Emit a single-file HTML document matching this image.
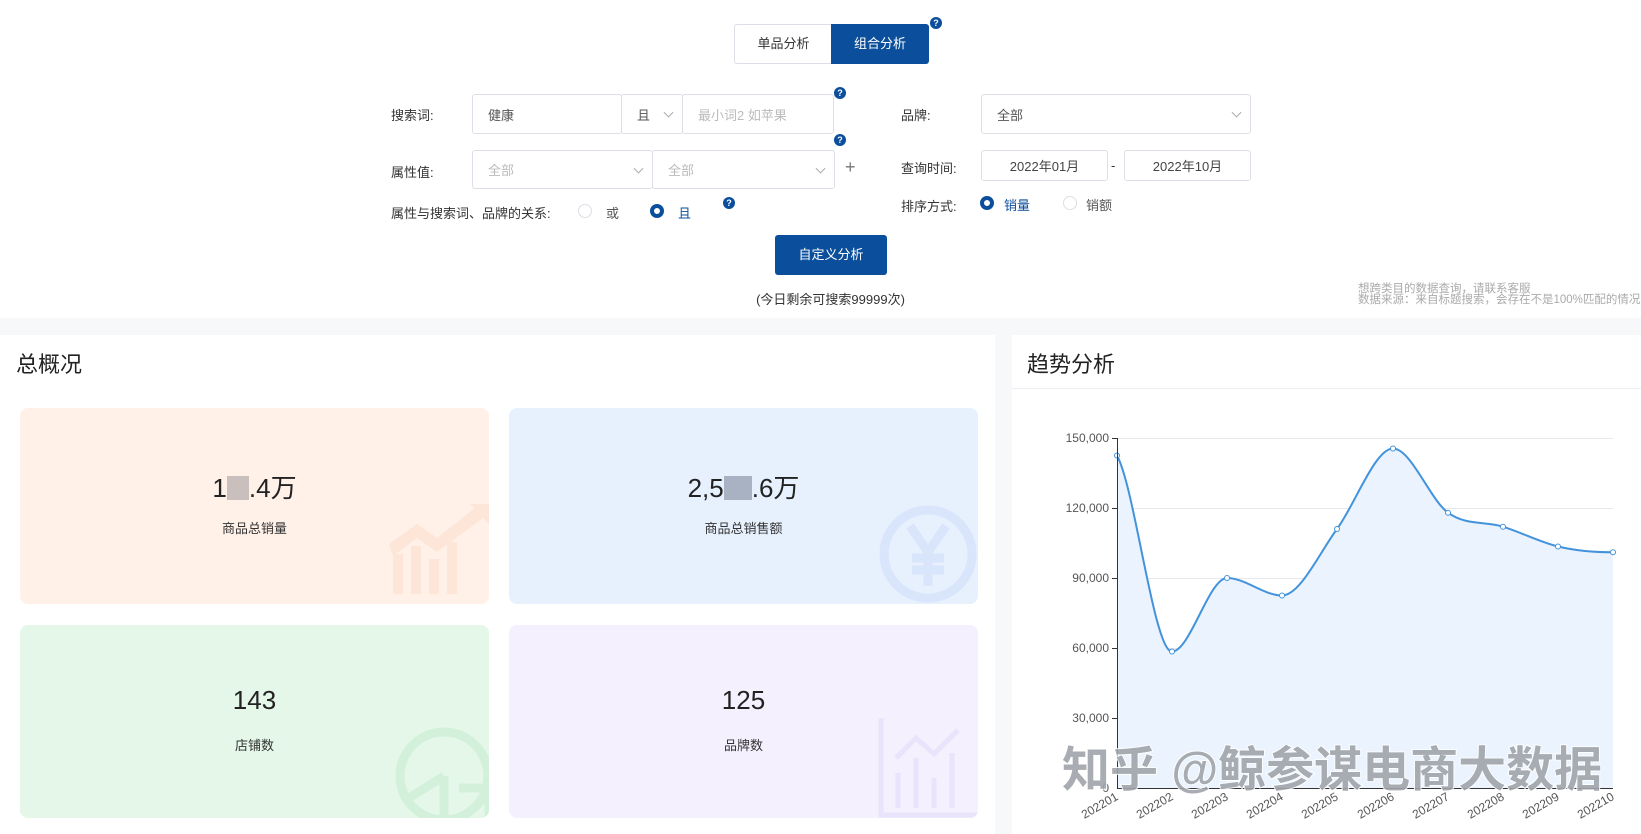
<!DOCTYPE html>
<html><head><meta charset="utf-8">
<style>
*{margin:0;padding:0;box-sizing:border-box}
body{width:1641px;height:834px;overflow:hidden;background:#fff;font-family:"Liberation Sans","Noto Sans CJK SC",sans-serif;color:#333;position:relative}
.a{position:absolute}
.lbl{font-size:13px;color:#333}
.inp{position:absolute;border:1px solid #dcdfe6;border-radius:3px;background:#fff;font-size:13px;color:#555;padding-left:15px;display:flex;align-items:center}
.ph{color:#bbb}
.chev{position:absolute;right:10px;top:50%;width:7px;height:7px;border-right:1px solid #aaa;border-bottom:1px solid #aaa;transform:translateY(-70%) rotate(45deg)}
.q{position:absolute;width:12px;height:12px;border-radius:50%;background:#0b4f9c;color:#fff;font-size:9px;font-weight:bold;text-align:center;line-height:12px}
.rad{position:absolute;width:14px;height:14px;border-radius:50%;border:1px solid #dcdfe6;background:#fff}
.rad.on{border:4px solid #0b4f9c}
.card{position:absolute;border-radius:8px;overflow:hidden}
.num{position:absolute;left:0;right:0;text-align:center;font-size:26px;color:#222;top:60px}
.cl{position:absolute;left:0;right:0;text-align:center;font-size:13px;color:#333;top:110px}
</style></head><body>
<div class="a" style="left:734px;top:24px;width:98px;height:40px;border:1px solid #dcdfe6;border-right:none;border-radius:3px 0 0 3px;font-size:13px;color:#333;text-align:center;line-height:38px">单品分析</div>
<div class="a" style="left:831px;top:24px;width:98px;height:40px;background:#0b4f9c;border-radius:0 3px 3px 0;font-size:13px;color:#fff;text-align:center;line-height:40px">组合分析</div>
<div class="q" style="left:930px;top:17px">?</div>

<div class="a lbl" style="left:391px;top:105px">搜索词:</div>
<div class="inp" style="left:472px;top:94px;width:150px;height:40px">健康</div>
<div class="inp" style="left:621px;top:94px;width:62px;height:40px;padding-left:15px">且<span class="chev"></span></div>
<div class="inp" style="left:682px;top:94px;width:152px;height:40px"><span class="ph">最小词2 如苹果</span></div>
<div class="q" style="left:834px;top:87px">?</div>

<div class="a lbl" style="left:901px;top:105px">品牌:</div>
<div class="inp" style="left:981px;top:94px;width:270px;height:40px">全部<span class="chev"></span></div>

<div class="a lbl" style="left:391px;top:162px">属性值:</div>
<div class="inp" style="left:472px;top:150px;width:181px;height:39px"><span class="ph">全部</span><span class="chev"></span></div>
<div class="inp" style="left:652px;top:150px;width:183px;height:39px"><span class="ph">全部</span><span class="chev"></span></div>
<div class="a" style="left:845px;top:157px;font-size:18px;color:#777">+</div>
<div class="q" style="left:834px;top:134px">?</div>

<div class="a lbl" style="left:901px;top:158px">查询时间:</div>
<div class="inp" style="left:981px;top:150px;width:127px;height:31px;justify-content:center;padding:0;color:#444">2022年01月</div>
<div class="a lbl" style="left:1111px;top:158px">-</div>
<div class="inp" style="left:1124px;top:150px;width:127px;height:31px;justify-content:center;padding:0;color:#444">2022年10月</div>

<div class="a lbl" style="left:391px;top:203px">属性与搜索词、品牌的关系:</div>
<div class="rad" style="left:578px;top:204px"></div>
<div class="a lbl" style="left:606px;top:203px;color:#555">或</div>
<div class="rad on" style="left:650px;top:204px"></div>
<div class="a lbl" style="left:678px;top:203px;color:#0b4f9c">且</div>
<div class="q" style="left:723px;top:197px">?</div>

<div class="a lbl" style="left:901px;top:196px">排序方式:</div>
<div class="rad on" style="left:980px;top:196px"></div>
<div class="a lbl" style="left:1004px;top:195px;color:#0b4f9c">销量</div>
<div class="rad" style="left:1063px;top:196px"></div>
<div class="a lbl" style="left:1086px;top:195px;color:#555">销额</div>

<div class="a" style="left:775px;top:235px;width:112px;height:40px;background:#0b4f9c;border-radius:3px;color:#fff;font-size:13px;text-align:center;line-height:40px">自定义分析</div>
<div class="a" style="left:0;width:1661px;top:289px;text-align:center;font-size:13px;color:#333">(今日剩余可搜索99999次)</div>

<div class="a" style="left:1358px;top:284px;font-size:11.5px;line-height:11px;color:#aaa;white-space:nowrap">想跨类目的数据查询，请联系客服<br>数据来源：来自标题搜索，会存在不是100%匹配的情况</div>

<div class="a" style="left:0;top:318px;width:1641px;height:516px;background:#f6f8fa"></div>
<div class="a" style="left:0;top:335px;width:995px;height:499px;background:#fff"></div>
<div class="a" style="left:1012px;top:335px;width:629px;height:499px;background:#fff"></div>

<div class="a" style="left:16px;top:347px;font-size:22px;color:#222">总概况</div>

<div class="card" style="left:20px;top:408px;width:469px;height:196px;background:#fff0e8">
<div class="num">1<span style="display:inline-block;width:22px;height:24px;background:#c9c0bd;vertical-align:-3px"></span>.4万</div><div class="cl">商品总销量</div>
<svg class="a" style="right:0;bottom:10px" width="100" height="90" viewBox="0 0 100 90"><g fill="#fde5d8"><rect x="4" y="50" width="10" height="40"/><rect x="22" y="42" width="10" height="48"/><rect x="40" y="55" width="10" height="35"/><rect x="58" y="38" width="10" height="52"/><path d="M0 40 L28 20 L48 34 L86 4 L80 0 L100 0 L100 20 L94 14 L48 48 L28 34 L4 52Z"/></g></svg>
</div>
<div class="card" style="left:509px;top:408px;width:469px;height:196px;background:#e7f0fd">
<svg class="a" style="right:0;bottom:0" width="110" height="110" viewBox="0 0 110 110"><circle cx="60" cy="60" r="44" fill="none" stroke="#d8e5fb" stroke-width="9"/><path d="M42 32 L60 58 L78 32 M60 58 V92 M44 64 H76 M44 76 H76" fill="none" stroke="#d8e5fb" stroke-width="9"/></svg>
<div class="num">2,5<span style="display:inline-block;width:28px;height:24px;background:#a9b2c2;vertical-align:-3px"></span>.6万</div><div class="cl">商品总销售额</div>
</div>
<div class="card" style="left:20px;top:625px;width:469px;height:193px;background:#e4f7e8">
<svg class="a" style="right:0;bottom:0" width="100" height="100" viewBox="0 0 100 100"><circle cx="55" cy="58" r="44" fill="none" stroke="#d3f0da" stroke-width="9"/><path d="M55 58 L20 80 M55 58 V100 M70 70 H100 V100" fill="none" stroke="#d3f0da" stroke-width="9"/></svg>
<div class="num">143</div><div class="cl">店铺数</div>
</div>
<div class="card" style="left:509px;top:625px;width:469px;height:193px;background:#f4f0fe">
<svg class="a" style="right:0;bottom:0" width="100" height="100" viewBox="0 0 100 100"><g fill="none" stroke="#e9e3fb" stroke-width="5"><path d="M3 0 V97 H100"/><path d="M20 90 V55 M38 90 V40 M56 90 V60 M74 90 V35"/><path d="M18 40 L38 20 L56 36 L80 12"/></g></svg>
<div class="num">125</div><div class="cl">品牌数</div>
</div>

<div class="a" style="left:1027px;top:347px;font-size:22px;color:#222">趋势分析</div>
<div class="a" style="left:1012px;top:388px;width:629px;height:1px;background:#eceef2"></div>

<svg class="a" style="left:0;top:0" width="1641" height="834">
<g stroke="#e6e8ec" stroke-width="1">
<line x1="1117" y1="438.5" x2="1613" y2="438.5"/><line x1="1117" y1="508.5" x2="1613" y2="508.5"/><line x1="1117" y1="578.5" x2="1613" y2="578.5"/><line x1="1117" y1="648.5" x2="1613" y2="648.5"/><line x1="1117" y1="718.5" x2="1613" y2="718.5"/></g>
<path d="M1117,455.5 C1135,488.2 1154,651.5 1172,651.5 C1190,651.5 1209,578 1227,578 C1245,578 1264,595.5 1282,595.5 C1300,595.5 1319,553.5 1337,529 C1355,504.5 1375,448.5 1393,448.5 C1411,448.5 1430,499.7 1448,512.7 C1466,525.7 1485,521.1 1503,526.7 C1521,532.3 1540,542.2 1558,546.5 C1576,550.8 1595,552.3 1613,552.3 L1613,788 L1117,788Z" fill="#eaf3fe"/>
<path d="M1117,455.5 C1135,488.2 1154,651.5 1172,651.5 C1190,651.5 1209,578 1227,578 C1245,578 1264,595.5 1282,595.5 C1300,595.5 1319,553.5 1337,529 C1355,504.5 1375,448.5 1393,448.5 C1411,448.5 1430,499.7 1448,512.7 C1466,525.7 1485,521.1 1503,526.7 C1521,532.3 1540,542.2 1558,546.5 C1576,550.8 1595,552.3 1613,552.3" fill="none" stroke="#4393db" stroke-width="2"/>
<g fill="#fff" stroke="#4393db" stroke-width="1"><circle cx="1117" cy="455.5" r="2.5"/><circle cx="1172" cy="651.5" r="2.5"/><circle cx="1227" cy="578" r="2.5"/><circle cx="1282" cy="595.5" r="2.5"/><circle cx="1337" cy="529" r="2.5"/><circle cx="1393" cy="448.5" r="2.5"/><circle cx="1448" cy="512.7" r="2.5"/><circle cx="1503" cy="526.7" r="2.5"/><circle cx="1558" cy="546.5" r="2.5"/><circle cx="1613" cy="552.3" r="2.5"/></g>
<g stroke="#333" stroke-width="1"><line x1="1117.5" y1="438" x2="1117.5" y2="788"/><line x1="1117" y1="788.5" x2="1613" y2="788.5"/>
<line x1="1112" y1="438.5" x2="1117" y2="438.5"/><line x1="1112" y1="508.5" x2="1117" y2="508.5"/><line x1="1112" y1="578.5" x2="1117" y2="578.5"/><line x1="1112" y1="648.5" x2="1117" y2="648.5"/><line x1="1112" y1="718.5" x2="1117" y2="718.5"/></g>
<g font-size="12" fill="#555" text-anchor="end" font-family="Liberation Sans,sans-serif"><text x="1109" y="442">150,000</text><text x="1109" y="512">120,000</text><text x="1109" y="582">90,000</text><text x="1109" y="652">60,000</text><text x="1109" y="722">30,000</text><text x="1109" y="792">0</text></g>
<g font-size="12" fill="#555" text-anchor="end" font-family="Liberation Sans,sans-serif">
<text transform="translate(1119,799) rotate(-30)">202201</text><text transform="translate(1174,799) rotate(-30)">202202</text><text transform="translate(1229,799) rotate(-30)">202203</text><text transform="translate(1284,799) rotate(-30)">202204</text><text transform="translate(1339,799) rotate(-30)">202205</text><text transform="translate(1395,799) rotate(-30)">202206</text><text transform="translate(1450,799) rotate(-30)">202207</text><text transform="translate(1505,799) rotate(-30)">202208</text><text transform="translate(1560,799) rotate(-30)">202209</text><text transform="translate(1615,799) rotate(-30)">202210</text></g>
<text x="1062" y="786" font-size="48" font-weight="bold" fill="#a0a4aa" stroke="#fff" stroke-width="2" paint-order="stroke" font-family="Liberation Sans,Noto Sans CJK SC,sans-serif" opacity="0.9">知乎 @鲸参谋电商大数据</text>
</svg>
</body></html>
